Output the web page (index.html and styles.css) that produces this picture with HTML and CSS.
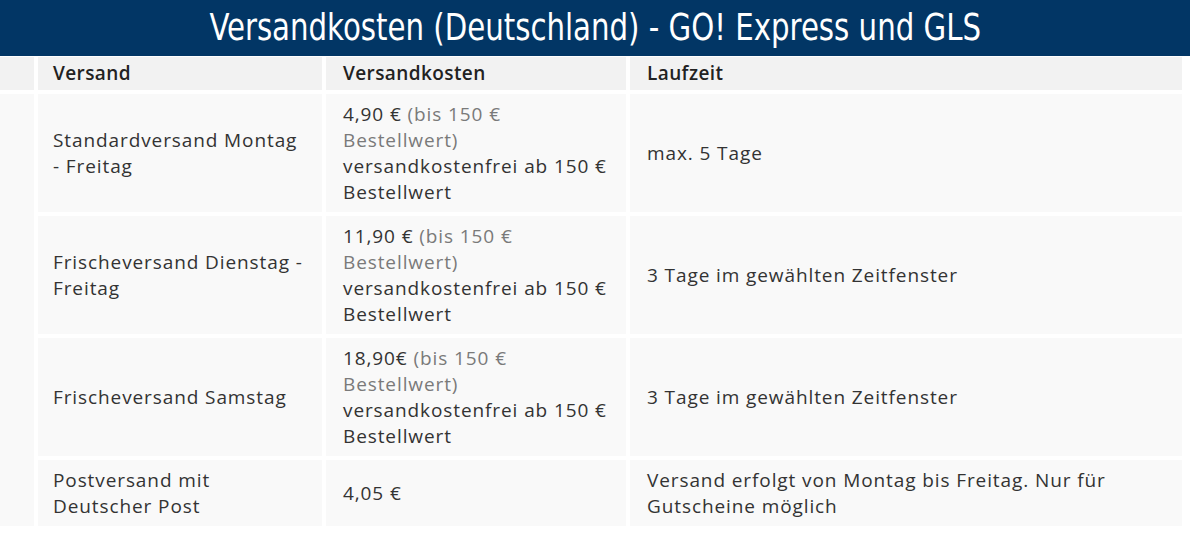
FILE: index.html
```html
<!DOCTYPE html>
<html lang="de">
  <head>
    <meta charset="UTF-8" />
    <meta name="viewport" content="width=device-width, initial-scale=1.0" />
    <title>Versandkosten</title>
    <link rel="stylesheet" href="styles.css">
  </head>
  <body>
    <h1 class="title"><span class="title-text">Versandkosten (Deutschland) - GO! Express und GLS</span></h1>

    <table class="shipping">
      <thead>
        <tr>
          <th class="spacer"></th>
          <th class="col-type">Versand</th>
          <th class="col-cost">Versandkosten</th>
          <th class="col-time">Laufzeit</th>
        </tr>
      </thead>
      <tbody>
        <tr>
          <td class="spacer" rowspan="4"></td>
          <td>Standardversand Montag<br />- Freitag</td>
          <td>4,90 € <span class="muted">(bis 150 €<br />Bestellwert)</span><br />versandkostenfrei ab 150 €<br />Bestellwert</td>
          <td>max. 5 Tage</td>
        </tr>
        <tr>
          <td>Frischeversand Dienstag -<br />Freitag</td>
          <td>11,90 € <span class="muted">(bis 150 €<br />Bestellwert)</span><br />versandkostenfrei ab 150 €<br />Bestellwert</td>
          <td>3 Tage im gewählten Zeitfenster</td>
        </tr>
        <tr>
          <td>Frischeversand Samstag</td>
          <td>18,90€ <span class="muted">(bis 150 €<br />Bestellwert)</span><br />versandkostenfrei ab 150 €<br />Bestellwert</td>
          <td>3 Tage im gewählten Zeitfenster</td>
        </tr>
        <tr>
          <td>Postversand mit<br />Deutscher Post</td>
          <td>4,05 €</td>
          <td>Versand erfolgt von Montag bis Freitag. Nur für<br />Gutscheine möglich</td>
        </tr>
      </tbody>
    </table>
  </body>
</html>
```

FILE: styles.css
```css
body {
  margin: 0;
  padding: 0;
  background-color: #ffffff;
  font-family: "Open Sans", "Noto Sans", Arial, sans-serif;
  color: #333333;
  overflow: hidden;
}

.title {
  margin: 0;
  height: 56px;
  line-height: 54px;
  background-color: #023665;
  color: #ffffff;
  text-align: center;
  font-family: "DejaVu Sans Condensed", sans-serif;
  font-weight: normal;
  font-size: 38px;
  white-space: nowrap;
}

.title-text {
  display: inline-block;
  transform: scaleX(0.855);
}

.shipping {
  border-collapse: separate;
  border-spacing: 4px;
  margin: -3px 0 0 -4px;
  width: 1190px;
  table-layout: fixed;
}

.shipping th,
.shipping td {
  box-sizing: border-box;
  padding: 7px 17px;
  text-align: left;
  vertical-align: middle;
  background-color: #f9f9f9;
  white-space: nowrap;
}

.shipping th {
  background-color: #f2f2f2;
  font-size: 19px;
  line-height: 19px;
  font-weight: 600;
  letter-spacing: 0.4px;
  color: #222222;
}

.shipping td {
  font-size: 19px;
  line-height: 26px;
  letter-spacing: 0.9px;
}

.shipping .spacer {
  width: 34px;
  padding: 0;
}

.shipping .col-type {
  width: 284px;
  padding-left: 15px;
}

.shipping tbody tr td:first-child,
.shipping tbody tr:first-child td:nth-child(2) {
  padding-left: 15px;
}

.shipping tbody tr:first-child td:first-child {
  padding: 0;
}

.shipping .col-cost {
  width: 300px;
}

.muted {
  color: #7a7a7a;
}
```
